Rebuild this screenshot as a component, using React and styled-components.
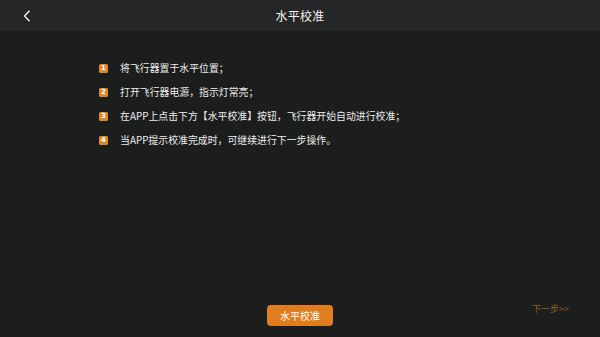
import React from "react";
import styled, { createGlobalStyle } from "styled-components";

const Global = createGlobalStyle`
  html, body { margin: 0; padding: 0; background: #1c1d1d; }
  body { font-family: "Noto Sans CJK SC", "Noto Sans", sans-serif; }
  #root { width: 600px; height: 337px; }
`;

const Page = styled.div`
  width: 600px;
  height: 337px;
  background: #1c1d1d;
  display: flex;
  flex-direction: column;
`;

const Header = styled.header`
  height: 31px;
  flex: 0 0 31px;
  background: #252627;
  display: grid;
  grid-template-columns: 60px 1fr 60px;
  align-items: center;
`;

const Back = styled.button`
  background: none;
  border: none;
  padding: 0 0 0 23px;
  display: flex;
  align-items: center;
  height: 31px;
  cursor: pointer;
`;

const Title = styled.h1`
  margin: 0;
  text-align: center;
  color: #f2f2f2;
  font-size: 12px;
  font-weight: 400;
  letter-spacing: 0.3px;
`;

const Body = styled.main`
  flex: 1;
  display: flex;
  flex-direction: column;
  padding: 29px 0 0 99px;
`;

const Steps = styled.ol`
  list-style: none;
  margin: 0;
  padding: 0;
  display: flex;
  flex-direction: column;
  gap: 8px;
`;

const Step = styled.li`
  display: flex;
  align-items: center;
  height: 16px;
  color: #ededed;
  font-size: 9.9px;
`;

const Badge = styled.span`
  width: 9px;
  height: 9px;
  border-radius: 1.5px;
  background: #e0892a;
  color: #fff;
  font-size: 7px;
  font-weight: 700;
  line-height: 9px;
  text-align: center;
  font-family: "DejaVu Sans", sans-serif;
  margin-right: 12px;
  flex: 0 0 9px;
`;

const Footer = styled.div`
  margin-top: auto;
  display: grid;
  grid-template-columns: 1fr auto 1fr;
  align-items: center;
  padding: 0 0 11px 0;
  margin-left: -99px;
`;

const Primary = styled.button`
  grid-column: 2;
  width: 66px;
  height: 21px;
  background: #e07d1f;
  color: #fff;
  border: none;
  border-radius: 4px;
  font-family: "Noto Sans CJK SC", sans-serif;
  font-size: 10px;
  padding: 0;
`;

const Next = styled.span`
  grid-column: 3;
  justify-self: end;
  margin-right: 31px;
  margin-top: -14px;
  color: #8d5d2b;
  font-size: 9px;
`;

const steps = [
  "将飞行器置于水平位置；",
  "打开飞行器电源，指示灯常亮；",
  "在APP上点击下方【水平校准】按钮，飞行器开始自动进行校准；",
  "当APP提示校准完成时，可继续进行下一步操作。",
];

export default function App() {
  return (
    <>
      <Global />
      <Page>
        <Header>
          <Back aria-label="back">
            <svg width="8" height="12" viewBox="0 0 8 12">
              <path d="M6.5 0.8 L1.5 6 L6.5 11.2" fill="none" stroke="#f0f0f0" strokeWidth="1.4" />
            </svg>
          </Back>
          <Title>水平校准</Title>
          <span />
        </Header>
        <Body>
          <Steps>
            {steps.map((s, i) => (
              <Step key={i}>
                <Badge>{i + 1}</Badge>
                {s}
              </Step>
            ))}
          </Steps>
          <Footer>
            <Primary>水平校准</Primary>
            <Next>下一步&gt;&gt;</Next>
          </Footer>
        </Body>
      </Page>
    </>
  );
}
